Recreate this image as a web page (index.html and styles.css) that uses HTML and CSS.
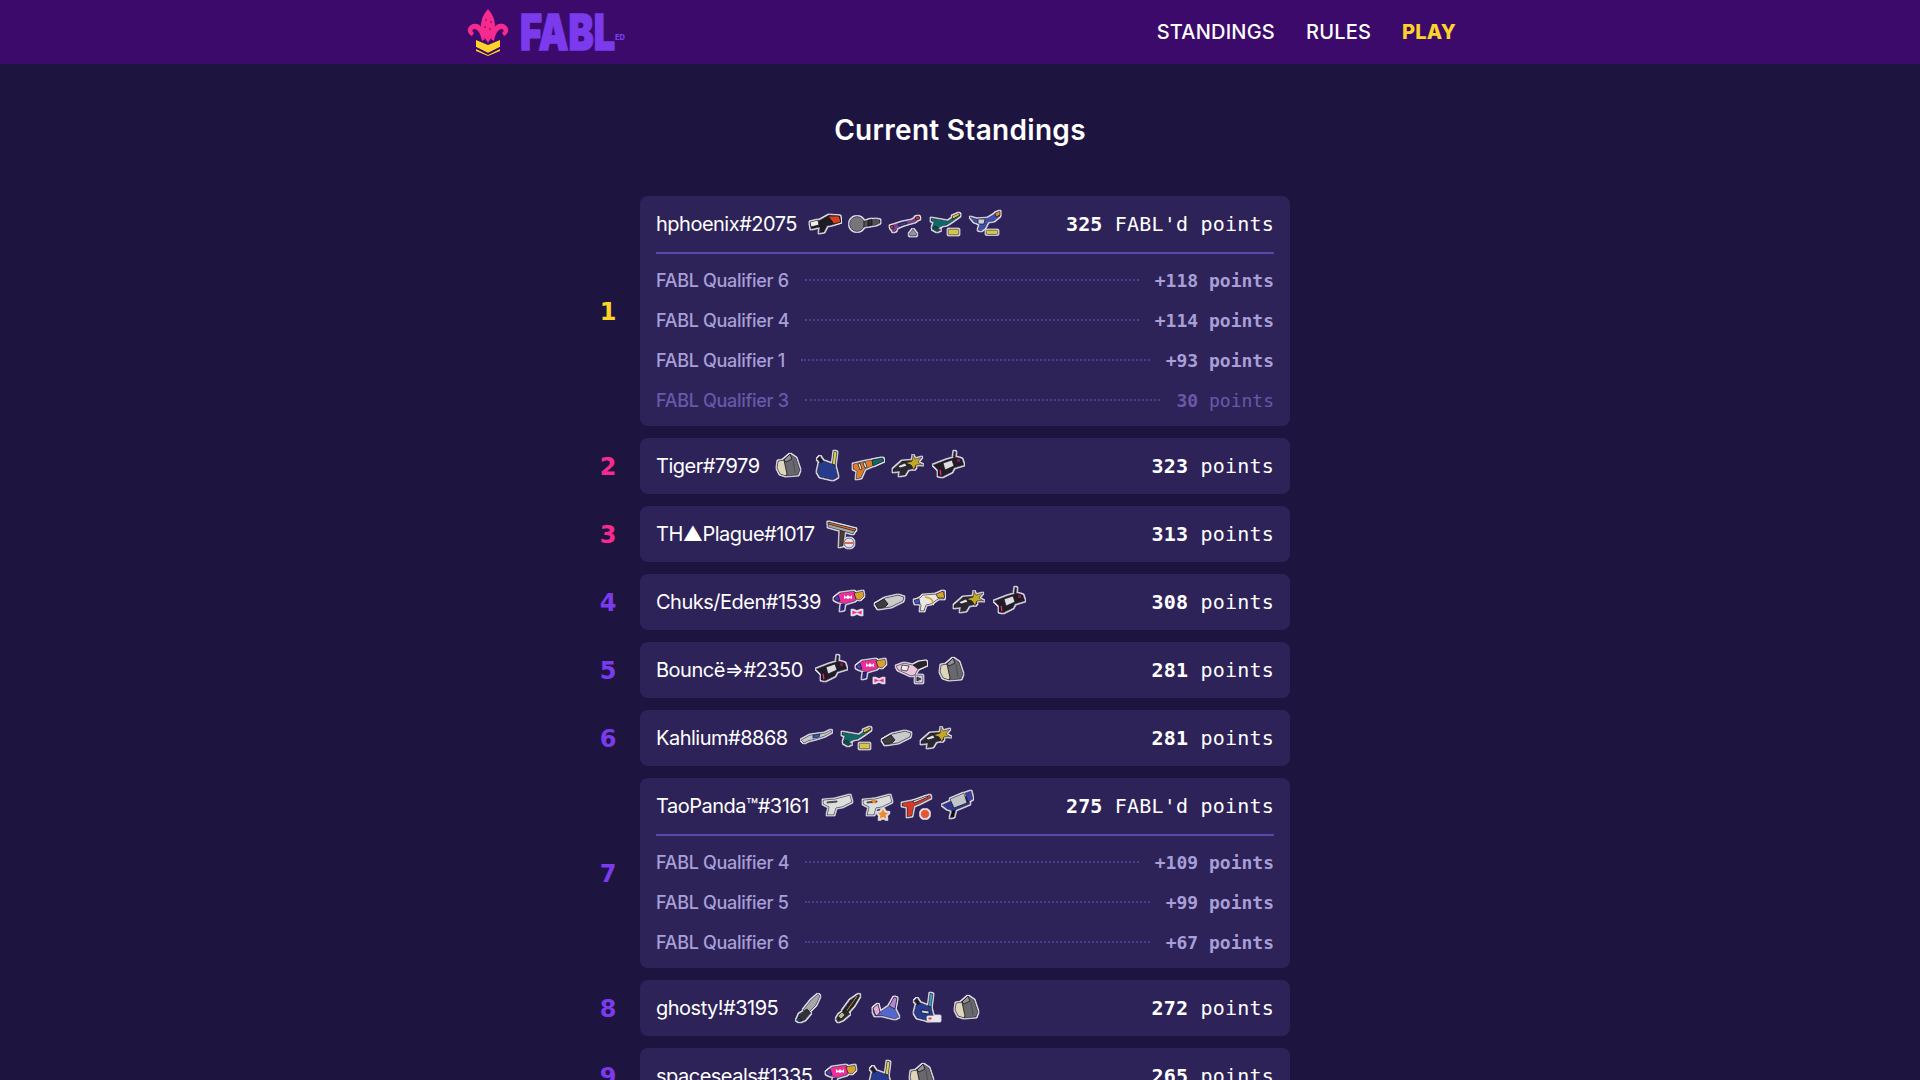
FILE: index.html
```html
<!DOCTYPE html>
<html>
<head>
<meta charset="utf-8">
<title>FABL Standings</title>
<link rel="stylesheet" href="styles.css">
</head>
<body>

<svg class="defs" width="0" height="0">
  <defs>
    <filter id="sticker" x="-15%" y="-15%" width="130%" height="130%">
      <feMorphology in="SourceAlpha" operator="dilate" radius="0.8" result="fat"/>
      <feFlood flood-color="#e6e3ee"/>
      <feComposite in2="fat" operator="in" result="halo"/>
      <feMerge><feMergeNode in="halo"/><feMergeNode in="SourceGraphic"/></feMerge>
    </filter>

    <symbol id="w-redblaster" viewBox="0 0 32 32"><g stroke="#15101f" stroke-width=".8" stroke-linejoin="round"><path d="M1 15l10-3 9-5 11 1 1 6-9 3-5 1-3 6-5 1 1-6-9 2z" fill="#1d1a22"/><path d="M19 8l11 0 2 6-7 2z" fill="#d8401f"/><path d="M1 14l8-2 1 5-8 2z" fill="#f2f0e6"/></g></symbol>
    <symbol id="w-pan" viewBox="0 0 32 32"><g stroke="#15101f" stroke-width=".8"><circle cx="8" cy="16" r="7.500" fill="#77757a"/><path d="M15 13l12-2 4 1v3l-4 2-12 2z" fill="#55535a"/><path d="M19 12l4-1v6l-4 1z" fill="#2d2b33"/></g></symbol>
    <symbol id="w-sniper" viewBox="0 0 32 32"><g stroke="#15101f" stroke-width=".7" stroke-linejoin="round"><path d="M1 18l12-4 10-2 6-4 2 2-5 4-11 3-7 3-1 3-3 1z" fill="#7d3a9a"/><path d="M9 16l8-2 1 2-8 2z" fill="#3b3fb0"/><path d="M26 9l4-1 1 3-4 1zM1 18l3-1 1 3-3 1z" fill="#c8342d"/><path d="M24 21l4 5-1 2h-6l-1-2z" fill="#8d93a8"/></g></symbol>
    <symbol id="w-teal" viewBox="0 0 32 32"><g stroke="#15101f" stroke-width=".7" stroke-linejoin="round"><path d="M2 10l17 3 8-6 4-1v2l-7 5-6 4-5 1-7 4-3-2 2-6-3-1z" fill="#0f6b66"/><path d="M23 8l7-3 1 2-7 4z" fill="#d6c33a"/><path d="M3 21l5 3 4-2-6-4z" fill="#0b4d4d"/><rect x="19" y="21" width="11" height="6" rx="1.500" fill="#d3c54d"/></g></symbol>
    <symbol id="w-blue" viewBox="0 0 32 32"><g stroke="#15101f" stroke-width=".7" stroke-linejoin="round"><path d="M1 9l7 2 11-1 8-5 4-1 0 4-6 5-6 1-3 6-4 3-3-1 2-6-6-2z" fill="#3a4fb5"/><path d="M26 5l5-2v4l-4 2z" fill="#e18a2b"/><path d="M9 11l7 0-1 5-6 0z" fill="#c9cfd8"/><rect x="17" y="22" width="12" height="4.500" rx="1.500" fill="#d3c54d"/></g></symbol>
    <symbol id="w-bucket" viewBox="0 0 32 32"><g stroke="#15101f" stroke-width=".8" stroke-linejoin="round"><path d="M11 10l7-6 6 4 4 12-2 5-12 1z" fill="#68676d"/><path d="M6 11l6-1 3 14-1 2-6-2-3-6z" fill="#dfd5ba"/><path d="M12 10l6-6 2 5-6 3z" fill="#8f8e94"/><path d="M21 10l2 13" stroke="#47464c" fill="none"/></g></symbol>
    <symbol id="w-pack" viewBox="0 0 32 32"><g stroke="#15101f" stroke-width=".8" stroke-linejoin="round"><path d="M8 6l4 6-3 2-4-5z" fill="#1a1a26"/><path d="M22 1l3 1-2 15-3-1z" fill="#d7d34a"/><path d="M7 13l5-2 11 4 3 12-5 3-13-3-3-5z" fill="#263a8e"/></g></symbol>
    <symbol id="w-orange" viewBox="0 0 32 32"><g stroke="#15101f" stroke-width=".7" stroke-linejoin="round"><path d="M1 14l13-3 17-3 1 3-14 6-5 2-4 9-5 1 1-8-4-2z" fill="#dd7d2b"/><path d="M20 10l10-2 2 3-11 5z" fill="#0f6b60"/><path d="M8 13l2 6-2 1-2-6zM13 12l2 5-2 1-2-5z" fill="#e9e4d6"/></g></symbol>
    <symbol id="w-star" viewBox="0 0 32 32"><g stroke="#15101f" stroke-width=".7" stroke-linejoin="round"><path d="M1 19l9-8 13-1 1 8-8 2-3 5-6 1 1-5-7 1z" fill="#2a2830"/><path d="M21 5l2 4 7-2-4 5 5 3-7 0-2 5-3-5-6-2 7-2z" fill="#c4a721"/><path d="M6 16l7-3 2 3-7 2z" fill="#e8e6e0"/></g></symbol>
    <symbol id="w-pinkblack" viewBox="0 0 32 32"><g stroke="#15101f" stroke-width=".7" stroke-linejoin="round"><path d="M22 1l2 1-1 6-2-1z" fill="#221d27"/><path d="M1 15l13-5 10-3 6 2 2 6-10 3-2 4-10 5-4-1 0-6z" fill="#201d26"/><path d="M11 13l9-3 2 6-9 4z" fill="#dfdde0"/><path d="M24 9l4-1 1 4-4 1z" fill="#7a1f58"/><path d="M7 20l2-1 1 6-2 1z" fill="#ef2f8a"/></g></symbol>
    <symbol id="w-roller" viewBox="0 0 32 32"><g stroke="#15101f" stroke-width=".7" stroke-linejoin="round"><path d="M14 11l5 2-2 15-4 1z" fill="#4d3a32"/><path d="M2 4l28 7-3 5L2 9z" fill="#a9a7a3"/><path d="M2 4l28 7-1 2L2 6z" fill="#d8762f"/><circle cx="23" cy="25" r="5" fill="#dfe4ee"/><path d="M19 25h8" stroke="#d6402f" stroke-width="1.500"/></g></symbol>
    <symbol id="w-pinkgun" viewBox="0 0 32 32"><g stroke="#15101f" stroke-width=".7" stroke-linejoin="round"><path d="M8 18l4 0-1 6-4 1z" fill="#2a1f8f"/><path d="M1 12l6-5 14-2 5 5-4 5-10 3-7-2-4-2z" fill="#ee2f9a"/><path d="M1 12l4-3 2 6-4 0z" fill="#3a3fc0"/><path d="M21 7l9-2 1 5-4 4-4-1z" fill="#d6a22c"/><path d="M11 9l2 2 2-2 0 4-2-1-2 1zM15 9l2 2 2-2 0 4-2-1-2 1z" fill="#fff" stroke="none"/></g></symbol>
    <symbol id="w-bow" viewBox="0 0 32 32"><use href="#w-pinkgun"/><g stroke="#e6e3ee" stroke-width=".8"><path d="M19 24l5 2 5-2v5l-5-2-5 2z" fill="#ee2f8a"/></g></symbol>
    <symbol id="w-saw" viewBox="0 0 32 32"><g stroke="#15101f" stroke-width=".8" stroke-linejoin="round"><path d="M2 18l10-6 13-3 6 2-1 4-12 6-13 2z" fill="#c8cacb"/><path d="M2 18l9-5 4 5-3 3-7 1z" fill="#3c3d40"/></g></symbol>
    <symbol id="w-yellowgun" viewBox="0 0 32 32"><g stroke="#15101f" stroke-width=".7" stroke-linejoin="round"><path d="M1 15l6-3 3-3 14-1 6-3 2 1-1 7-6 0-7 5-5 1-2 6-4 0 1-6-3-2z" fill="#e9e7df"/><path d="M23 8l7-3 2 7-7 0z" fill="#d6a22c"/><path d="M1 14l5-1 1 5-5 0z" fill="#3a4fc0"/><path d="M12 11c6 1 9 3 7 7" fill="none" stroke="#d6a22c" stroke-width="1.600"/></g></symbol>
    <symbol id="w-pinkwhite" viewBox="0 0 32 32"><g stroke="#15101f" stroke-width=".7" stroke-linejoin="round"><path d="M1 12l8-3 9 2 6-3 7-1 1 4-9 4-3 6-4 1-13-6z" fill="#ecc3d8"/><path d="M18 11l6-3 7-1 1 4-9 4z" fill="#2a2228"/><path d="M7 11l7 1-2 5-6-1z" fill="#f0e9ee"/><rect x="20" y="21" width="8" height="8" rx="1.500" fill="#cfcbd6"/><path d="M22 23l4 2-4 2z" fill="#5f2f8f"/></g></symbol>
    <symbol id="w-rifle" viewBox="0 0 32 32"><g stroke="#15101f" stroke-width=".7" stroke-linejoin="round"><path d="M1 18l9-5 15-2 6-3 1 2-7 4-9 3-8 2-4 2z" fill="#c4c8cc"/><path d="M13 13l7-1-1 3-6 1z" fill="#2c62c8"/></g></symbol>
    <symbol id="w-white" viewBox="0 0 32 32"><g stroke="#15101f" stroke-width=".7" stroke-linejoin="round"><path d="M2 10l12-1 15-4 2 7-10 5-6 1-2 7-7 0 2-8-6-3z" fill="#dcdedb"/><path d="M6 12l10-1v1l-10 1z" fill="#a9aaa8"/></g></symbol>
    <symbol id="w-whitestar" viewBox="0 0 32 32"><use href="#w-white"/><path d="M22 18l2 4 4 .5-3 3 1 4-4-2-4 2 1-4-3-3 4-.5z" fill="#ee8a2c" stroke="#e6e3ee" stroke-width=".8"/><path d="M13 8l1 2 2 .3-1.500 1.500.4 2-1.900-1-1.900 1 .4-2L10 10.300l2-.3z" fill="#ee8a2c"/></symbol>
    <symbol id="w-zapper" viewBox="0 0 32 32"><g stroke="#15101f" stroke-width=".7" stroke-linejoin="round"><path d="M1 13l15-3 13-5 1 3-12 6-5 2-2 10-5 1 0-10-5-1z" fill="#d33a28"/><path d="M12 11l14-5 1 1-14 6z" fill="#e7e2dc"/><circle cx="24" cy="24" r="4.500" fill="#e3582f" stroke="#e6e3ee"/></g></symbol>
    <symbol id="w-bluegray" viewBox="0 0 32 32"><g stroke="#15101f" stroke-width=".7" stroke-linejoin="round"><path d="M11 20l4-1-2 8-4 1z" fill="#111"/><path d="M1 15l9-4 16-5 3 8-12 5-5 2-6-2z" fill="#2f358e"/><path d="M9 9l14-6 3 10-13 5z" fill="#bfc4c9"/><path d="M24 3l6-2 2 8-5 3z" fill="#3c3ca2"/></g></symbol>
    <symbol id="w-brush" viewBox="0 0 32 32"><g stroke="#15101f" stroke-width=".7" stroke-linejoin="round"><path d="M28 2l2 2-4 9-9 9-4-4 8-10z" fill="#a4a6ac"/><path d="M17 17l4 4-6 7-5 2-3-3 2-5z" fill="#32323a"/><path d="M9 25l3 3-3 2-3-2z" fill="#1f3d6b"/></g></symbol>
    <symbol id="w-brushgold" viewBox="0 0 32 32"><g stroke="#15101f" stroke-width=".7" stroke-linejoin="round"><path d="M29 2l1 2-6 10-8 9-4-4 8-11z" fill="#22202a"/><path d="M27 3l1 1-12 17-1-1z" fill="#d9a73a"/><path d="M16 18l4 4-7 6-5 2-2-3 3-5z" fill="#2c2a28"/><path d="M12 20l3 3-4 4-3-3z" fill="#bdb68c"/></g></symbol>
    <symbol id="w-claw" viewBox="0 0 32 32"><g stroke="#15101f" stroke-width=".7" stroke-linejoin="round"><path d="M3 16l5-4 2 8 9-6 5-9 3 1-2 11 4 8-4 2-12-3-8 0-2-4z" fill="#5566cc"/><path d="M3 16l5-4 2 8-3 4-2-2z" fill="#e7a8d8"/><path d="M19 14l5-9 3 1-2 11z" fill="#b284d6"/></g></symbol>
    <symbol id="w-packred" viewBox="0 0 32 32"><g stroke="#15101f" stroke-width=".8" stroke-linejoin="round"><path d="M7 6l4 6-3 2-4-5z" fill="#1a1a26"/><path d="M20 1l3 1-2 15-3-1z" fill="#37a0c8"/><path d="M6 13l5-2 10 4 3 12-5 2-12-3-3-5z" fill="#263a8e"/><path d="M11 18l8 1 0 3-7-1z" fill="#d6d8e0"/><rect x="17" y="24" width="13" height="5" rx="1" fill="#ebe9ec" stroke="#e6e3ee"/><path d="M18.500 25.500h3v2h-3z" fill="#d6402f" stroke="none"/></g></symbol>
  </defs>
</svg>

<div class="topbar">
  <div class="topbar-inner">
    <a class="logo" href="#">
      <svg width="44" height="64" viewBox="0 0 44 64">
        <path d="M10 40l12 5 12-5v7l-12 6-12-6z" fill="#fcd22b"/>
        <path d="M10 47l12 6 12-6v2l-12 6-12-6z" fill="#3b0a6b"/>
        <path d="M10 49l12 6 12-6v2l-12 5-12-5z" fill="#fcd22b"/>
        <path d="M22 9c5 6 7 11 7 17 0 5-2 8-4 12l-3 5-3-5c-2-4-4-7-4-12 0-6 2-11 7-17z" fill="#f72b8f"/>
        <path d="M16 41c-1-5-3-12-8-12-2 0-2 3 0 4l-2 3c-3-1-5-5-4-7 1-4 5-6 9-5 5 1 7 7 8 15zM28 41c1-5 3-12 8-12 2 0 2 3 0 4l2 3c3-1 5-5 4-7-1-4-5-6-9-5-5 1-7 7-8 15z" fill="#f72b8f"/>
        <circle cx="20" cy="20" r="1.200" fill="#bd1a72"/><circle cx="25" cy="22" r="1.200" fill="#bd1a72"/><circle cx="19" cy="27" r="1.200" fill="#bd1a72"/><circle cx="24" cy="29" r="1.200" fill="#bd1a72"/>
      </svg>
      <svg class="wordmark" width="110" height="64" viewBox="0 0 110 64">
        <text x="0" y="50" textLength="95" lengthAdjust="spacingAndGlyphs" class="wordmark-big">FABL</text>
        <text x="95" y="40" textLength="10" lengthAdjust="spacingAndGlyphs" class="wordmark-small">ED</text>
      </svg>
    </a>
    <div class="nav">
      <a href="#">STANDINGS</a>
      <a href="#">RULES</a>
      <a href="#" class="nav-play">PLAY</a>
    </div>
  </div>
</div>

<h1 class="page-title">Current Standings</h1>

<div class="standings">

  <div class="entry">
    <div class="rank rank-first">1</div>
    <div class="card">
      <div class="card-head">
        <span class="player">hphoenix#2075</span>
        <span class="weapons">
          <svg class="weapon"><use href="#w-redblaster"/></svg>
          <svg class="weapon"><use href="#w-pan"/></svg>
          <svg class="weapon"><use href="#w-sniper"/></svg>
          <svg class="weapon"><use href="#w-teal"/></svg>
          <svg class="weapon"><use href="#w-blue"/></svg>
        </span>
        <span class="points"><b>325</b> FABL'd points</span>
      </div>
      <div class="results">
        <div class="result"><span>FABL Qualifier 6</span><i class="leader"></i><span class="result-points"><b>+118</b> points</span></div>
        <div class="result"><span>FABL Qualifier 4</span><i class="leader"></i><span class="result-points"><b>+114</b> points</span></div>
        <div class="result"><span>FABL Qualifier 1</span><i class="leader"></i><span class="result-points"><b>+93</b> points</span></div>
        <div class="result result-dropped"><span>FABL Qualifier 3</span><i class="leader"></i><span class="result-points"><b>30</b> points</span></div>
      </div>
    </div>
  </div>

  <div class="entry">
    <div class="rank rank-top">2</div>
    <div class="card">
      <div class="card-head">
        <span class="player">Tiger#7979</span>
        <span class="weapons">
          <svg class="weapon"><use href="#w-bucket"/></svg>
          <svg class="weapon"><use href="#w-pack"/></svg>
          <svg class="weapon"><use href="#w-orange"/></svg>
          <svg class="weapon"><use href="#w-star"/></svg>
          <svg class="weapon"><use href="#w-pinkblack"/></svg>
        </span>
        <span class="points"><b>323</b> points</span>
      </div>
    </div>
  </div>

  <div class="entry">
    <div class="rank rank-top">3</div>
    <div class="card">
      <div class="card-head">
        <span class="player">TH▲Plague#1017</span>
        <span class="weapons">
          <svg class="weapon"><use href="#w-roller"/></svg>
        </span>
        <span class="points"><b>313</b> points</span>
      </div>
    </div>
  </div>

  <div class="entry">
    <div class="rank">4</div>
    <div class="card">
      <div class="card-head">
        <span class="player">Chuks/Eden#1539</span>
        <span class="weapons">
          <svg class="weapon"><use href="#w-bow"/></svg>
          <svg class="weapon"><use href="#w-saw"/></svg>
          <svg class="weapon"><use href="#w-yellowgun"/></svg>
          <svg class="weapon"><use href="#w-star"/></svg>
          <svg class="weapon"><use href="#w-pinkblack"/></svg>
        </span>
        <span class="points"><b>308</b> points</span>
      </div>
    </div>
  </div>

  <div class="entry">
    <div class="rank">5</div>
    <div class="card">
      <div class="card-head">
        <span class="player">Bouncë⇒#2350</span>
        <span class="weapons">
          <svg class="weapon"><use href="#w-pinkblack"/></svg>
          <svg class="weapon"><use href="#w-bow"/></svg>
          <svg class="weapon"><use href="#w-pinkwhite"/></svg>
          <svg class="weapon"><use href="#w-bucket"/></svg>
        </span>
        <span class="points"><b>281</b> points</span>
      </div>
    </div>
  </div>

  <div class="entry">
    <div class="rank">6</div>
    <div class="card">
      <div class="card-head">
        <span class="player">Kahlium#8868</span>
        <span class="weapons">
          <svg class="weapon"><use href="#w-rifle"/></svg>
          <svg class="weapon"><use href="#w-teal"/></svg>
          <svg class="weapon"><use href="#w-saw"/></svg>
          <svg class="weapon"><use href="#w-star"/></svg>
        </span>
        <span class="points"><b>281</b> points</span>
      </div>
    </div>
  </div>

  <div class="entry">
    <div class="rank">7</div>
    <div class="card">
      <div class="card-head">
        <span class="player">TaoPanda™#3161</span>
        <span class="weapons">
          <svg class="weapon"><use href="#w-white"/></svg>
          <svg class="weapon"><use href="#w-whitestar"/></svg>
          <svg class="weapon"><use href="#w-zapper"/></svg>
          <svg class="weapon"><use href="#w-bluegray"/></svg>
        </span>
        <span class="points"><b>275</b> FABL'd points</span>
      </div>
      <div class="results">
        <div class="result"><span>FABL Qualifier 4</span><i class="leader"></i><span class="result-points"><b>+109</b> points</span></div>
        <div class="result"><span>FABL Qualifier 5</span><i class="leader"></i><span class="result-points"><b>+99</b> points</span></div>
        <div class="result"><span>FABL Qualifier 6</span><i class="leader"></i><span class="result-points"><b>+67</b> points</span></div>
      </div>
    </div>
  </div>

  <div class="entry">
    <div class="rank">8</div>
    <div class="card">
      <div class="card-head">
        <span class="player">ghosty!#3195</span>
        <span class="weapons">
          <svg class="weapon"><use href="#w-brush"/></svg>
          <svg class="weapon"><use href="#w-brushgold"/></svg>
          <svg class="weapon"><use href="#w-claw"/></svg>
          <svg class="weapon"><use href="#w-packred"/></svg>
          <svg class="weapon"><use href="#w-bucket"/></svg>
        </span>
        <span class="points"><b>272</b> points</span>
      </div>
    </div>
  </div>

  <div class="entry">
    <div class="rank">9</div>
    <div class="card">
      <div class="card-head">
        <span class="player">spaceseals#1335</span>
        <span class="weapons">
          <svg class="weapon"><use href="#w-pinkgun"/></svg>
          <svg class="weapon"><use href="#w-pack"/></svg>
          <svg class="weapon"><use href="#w-bucket"/></svg>
        </span>
        <span class="points"><b>265</b> points</span>
      </div>
    </div>
  </div>

</div>

</body>
</html>
```

FILE: styles.css
```css
html, body {
  margin: 0;
  height: 1080px;
  overflow: hidden;
}

body {
  background: #1d1440;
  color: #fff;
  font-family: "Inter", "Liberation Sans", sans-serif;
}

a {
  color: inherit;
  text-decoration: none;
}

.defs {
  display: block;
  height: 0;
}

.topbar {
  background: #3b0a6b;
  height: 64px;
}

.topbar-inner {
  width: 992px;
  height: 64px;
  margin: 0 auto;
  display: flex;
  align-items: center;
  justify-content: space-between;
}

.logo {
  display: flex;
  align-items: center;
  gap: 10px;
  margin-left: 2px;
}

.wordmark-big {
  font-family: "Inter", sans-serif;
  font-weight: 900;
  font-size: 50px;
  fill: #7c3aed;
  stroke: #7c3aed;
  stroke-width: 1.5px;
}

.wordmark-small {
  font-family: "Inter", sans-serif;
  font-weight: 800;
  font-size: 8px;
  fill: #7c3aed;
}

.nav {
  display: flex;
  gap: 31px;
  font-size: 20px;
  font-weight: 500;
  letter-spacing: 0.2px;
}

.nav-play {
  color: #fcd22b;
  font-weight: 800;
}

.page-title {
  margin: 48px 0;
  height: 36px;
  line-height: 36px;
  text-align: center;
  font-size: 28px;
  font-weight: 600;
  letter-spacing: 0.3px;
}

.standings {
  width: 740px;
  margin: 0 auto;
  padding-right: 40px;
  box-sizing: border-box;
  display: flex;
  flex-direction: column;
  gap: 12px;
}

.entry {
  display: flex;
  align-items: center;
  gap: 14px;
}

.rank {
  width: 36px;
  flex: none;
  padding-top: 2px;
  text-align: center;
  font-family: "DejaVu Sans", sans-serif;
  font-weight: 700;
  font-size: 24px;
  color: #7c3aed;
}

.rank-first {
  color: #fcd22b;
}

.rank-top {
  color: #f72b8f;
}

.card {
  flex: 1;
  background: #2d2359;
  border-radius: 8px;
  padding: 0 16px;
}

.card-head {
  height: 56px;
  display: flex;
  align-items: center;
}

.player {
  font-size: 20px;
  letter-spacing: -0.5px;
}

.weapons {
  display: flex;
  gap: 8px;
  margin-left: 12px;
}

.weapon {
  width: 32px;
  height: 32px;
  filter: url(#sticker);
}

.points {
  margin-left: auto;
  font-family: "DejaVu Sans Mono", monospace;
  font-size: 20px;
  letter-spacing: 0.2px;
}

.results {
  border-top: 2px solid #5c46a8;
  padding: 6px 0;
}

.result {
  height: 40px;
  display: flex;
  align-items: center;
  gap: 16px;
  color: #a89fd6;
  font-size: 18px;
  font-weight: 500;
  letter-spacing: -0.3px;
}

.result-dropped {
  color: #6a58a8;
}

.leader {
  flex: 1;
  border-top: 2px dotted #4d3d8f;
}

.result-points {
  font-family: "DejaVu Sans Mono", monospace;
  font-size: 18px;
  font-weight: 700;
  letter-spacing: 0;
}

.result-dropped .result-points {
  font-weight: 400;
}

.result-dropped .result-points b {
  font-weight: 700;
}
```
